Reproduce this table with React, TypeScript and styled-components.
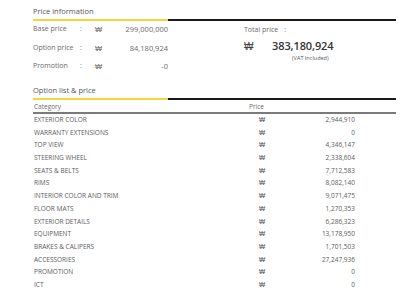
import React from 'react';
import styled, { createGlobalStyle } from 'styled-components';

const GlobalStyle = createGlobalStyle`
  body {
    margin: 0;
    background: #ffffff;
    font-family: 'Open Sans', 'Liberation Sans', sans-serif;
    color: #555555;
  }
`;

type Option = { name: string; price: string };

const options: Option[] = [
  { name: 'EXTERIOR COLOR', price: '2,944,910' },
  { name: 'WARRANTY EXTENSIONS', price: '0' },
  { name: 'TOP VIEW', price: '4,346,147' },
  { name: 'STEERING WHEEL', price: '2,338,604' },
  { name: 'SEATS & BELTS', price: '7,712,583' },
  { name: 'RIMS', price: '8,082,140' },
  { name: 'INTERIOR COLOR AND TRIM', price: '9,071,475' },
  { name: 'FLOOR MATS', price: '1,270,353' },
  { name: 'EXTERIOR DETAILS', price: '6,286,323' },
  { name: 'EQUIPMENT', price: '13,178,950' },
  { name: 'BRAKES & CALIPERS', price: '1,701,503' },
  { name: 'ACCESSORIES', price: '27,247,936' },
  { name: 'PROMOTION', price: '0' },
  { name: 'ICT', price: '0' },
];

const Page = styled.div`
  padding: 6px 4px 0 33px;
`;

const SectionTitle = styled.div`
  font-size: 7.5px;
  line-height: 11px;
  color: #555;
  margin-bottom: 2px;
`;

const Rule = styled.div`
  display: flex;
  height: 2px;
`;

const RuleYellow = styled.div`
  width: 135px;
  background: #f3d63c;
`;

const RuleBlack = styled.div`
  flex: 1;
  background: #1a1a1a;
`;

const PriceInfo = styled.div`
  display: flex;
  padding-top: 1px;
  margin-bottom: 13px;
`;

const LeftCol = styled.div`
  width: 135px;
  display: flex;
  flex-direction: column;
  gap: 6.5px;
  padding-top: 1px;
`;

const PriceRow = styled.div`
  display: grid;
  grid-template-columns: 47px 15px 1fr;
  height: 12px;
  line-height: 12px;
  font-size: 7px;
  color: #6a6a6a;
`;

const Amount = styled.span`
  display: flex;
  justify-content: space-between;
  font-size: 7.5px;
`;

const RightCol = styled.div`
  margin-left: 76px;
  display: flex;
  flex-direction: column;
  padding-top: 2px;
`;

const TotalLabel = styled.div`
  font-size: 7px;
  line-height: 12px;
  color: #6a6a6a;
  span { margin-left: 6px; }
`;

const TotalValue = styled.div`
  display: flex;
  align-items: baseline;
  line-height: 16px;
  margin-top: 2px;
  color: #333;
`;

const Won = styled.span`
  font-size: 10px;
  width: 28px;
  color: #444;
`;

const BigNumber = styled.span`
  font-size: 11px;
  font-weight: 600;
  letter-spacing: -0.1px;
`;

const Vat = styled.div`
  font-size: 5.5px;
  line-height: 8px;
  color: #555;
  padding-left: 48px;
`;

const TableHead = styled.div`
  display: grid;
  grid-template-columns: 215px 1fr;
  height: 10px;
  line-height: 10px;
  font-size: 6.5px;
  color: #6a6a6a;
  padding-left: 1px;
  border-bottom: 2px solid #7a7a7a;
  margin-top: 2px;
`;

const TableRow = styled.div`
  display: grid;
  grid-template-columns: 225px 10px 86px;
  height: 12.7px;
  line-height: 12.7px;
  font-size: 6.5px;
  color: #5c5c5c;
  padding-left: 1px;
`;

const Value = styled.span`
  text-align: right;
`;

export default function App() {
  return (
    <Page>
      <GlobalStyle />
      <SectionTitle>Price information</SectionTitle>
      <Rule>
        <RuleYellow />
        <RuleBlack />
      </Rule>
      <PriceInfo>
        <LeftCol>
          <PriceRow><span>Base price</span><span>:</span><Amount><span>₩</span>299,000,000</Amount></PriceRow>
          <PriceRow><span>Option price</span><span>:</span><Amount><span>₩</span>84,180,924</Amount></PriceRow>
          <PriceRow><span>Promotion</span><span>:</span><Amount><span>₩</span>-0</Amount></PriceRow>
        </LeftCol>
        <RightCol>
          <TotalLabel>Total price<span>:</span></TotalLabel>
          <TotalValue><Won>₩</Won><BigNumber>383,180,924</BigNumber></TotalValue>
          <Vat>(VAT Included)</Vat>
        </RightCol>
      </PriceInfo>
      <SectionTitle>Option list &amp; price</SectionTitle>
      <Rule>
        <RuleYellow />
        <RuleBlack />
      </Rule>
      <TableHead><span>Category</span><span>Price</span></TableHead>
      {options.map((o) => (
        <TableRow key={o.name}>
          <span>{o.name}</span>
          <span>₩</span>
          <Value>{o.price}</Value>
        </TableRow>
      ))}
    </Page>
  );
}
